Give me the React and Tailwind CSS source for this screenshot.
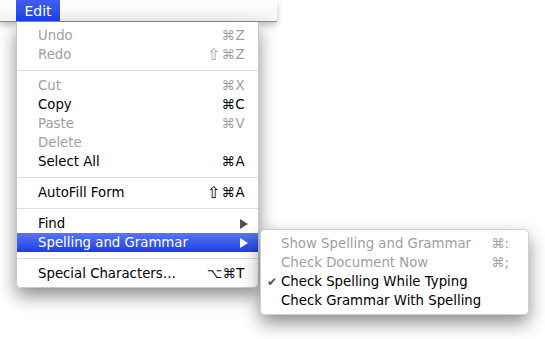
import React from 'react'

const font = { fontFamily: '"DejaVu Sans", "Lucida Grande", sans-serif' }

const editItems = [
  { label: 'Undo', key: '⌘Z', disabled: true },
  { label: 'Redo', key: '⌘Z', shift: true, disabled: true },
  { sep: true },
  { label: 'Cut', key: '⌘X', disabled: true },
  { label: 'Copy', key: '⌘C' },
  { label: 'Paste', key: '⌘V', disabled: true },
  { label: 'Delete', disabled: true },
  { label: 'Select All', key: '⌘A' },
  { sep: true },
  { label: 'AutoFill Form', key: '⌘A', shift: true },
  { sep: true },
  { label: 'Find', submenu: true },
  { label: 'Spelling and Grammar', submenu: true, active: true },
  { sep: true },
  { label: 'Special Characters…', key: '⌥⌘T' },
]

const spellingItems = [
  { label: 'Show Spelling and Grammar', key: '⌘:', disabled: true },
  { label: 'Check Document Now', key: '⌘;', disabled: true },
  { label: 'Check Spelling While Typing', checked: true },
  { label: 'Check Grammar With Spelling' },
]

function Arrow({ white }) {
  return (
    <svg width="8" height="10" viewBox="0 0 8 10">
      <path d="M0 0 L8 5 L0 10 Z" fill={white ? '#ffffff' : '#555555'} />
    </svg>
  )
}

function MenuRow({ item }) {
  if (item.sep) {
    return (
      <div className="h-[12px] flex items-center">
        <div className="h-px w-full bg-[#dcdcdc]" />
      </div>
    )
  }
  const color = item.active
    ? 'text-white bg-gradient-to-b from-[#5a74f3] to-[#1b3ce6]'
    : item.disabled ? 'text-[#a0a0a0]' : 'text-black'
  return (
    <div className={`h-[19px] flex items-center justify-between pl-[21px] pr-[13px] ${color}`}>
      <span>{item.label}</span>
      {item.key && (
        <span className="flex items-center tracking-[0.5px]">
          {item.shift && <span className="text-[16px] mr-[1px]">⇧</span>}
          {item.key}
        </span>
      )}
      {item.submenu && (
        <span className="-mr-[3px]"><Arrow white={item.active} /></span>
      )}
    </div>
  )
}

export default function App() {
  return (
    <div className="relative w-[545px] h-[339px] bg-white overflow-hidden text-[13.3px] leading-none" style={font}>
      {/* menu bar strip */}
      <div className="w-[277px] h-[22px] bg-gradient-to-b from-white to-[#f4f4f4] border-b border-[#8e8e8e] shadow-[0_3px_6px_rgba(0,0,0,0.25)] flex">
        <div className="ml-[16px] w-[44px] h-[21px] bg-gradient-to-b from-[#3f5df2] to-[#1f40ea] text-white text-[14px] flex items-center justify-center">
          Edit
        </div>
      </div>

      {/* Edit menu */}
      <div className="absolute left-[16px] top-[22px] w-[243px] bg-white/[0.97] pt-[4px] pb-[4px] rounded-b-[5px] border-x border-b border-[#c8c8c8] shadow-[0_8px_18px_rgba(0,0,0,0.45)]">
        {editItems.map((item, i) => <MenuRow key={i} item={item} />)}
      </div>

      {/* Spelling submenu */}
      <div className="absolute left-[260px] top-[229px] w-[269px] bg-white/[0.97] pt-[4px] pb-[4px] rounded-[5px] border border-[#d0d0d0] shadow-[0_8px_18px_rgba(0,0,0,0.45)]">
        {spellingItems.map((item, i) => (
          <div key={i} className={`relative h-[19px] flex items-center justify-between pl-[20px] pr-[19px] ${item.disabled ? 'text-[#a0a0a0]' : 'text-black'}`}>
            {item.checked && (
              <span className="absolute left-[6px] text-[#555] text-[12px]">✔</span>
            )}
            <span>{item.label}</span>
            {item.key && <span>{item.key}</span>}
          </div>
        ))}
      </div>
    </div>
  )
}
